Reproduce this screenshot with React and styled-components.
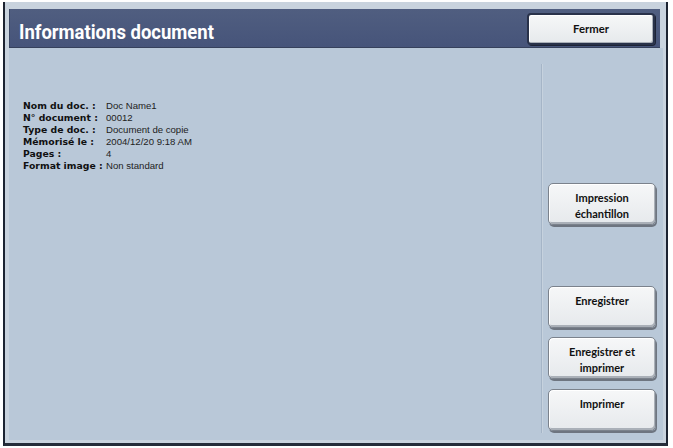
import React from "react";
import styled, { createGlobalStyle } from "styled-components";

const GlobalStyle = createGlobalStyle`
  html, body { margin: 0; padding: 0; background: #ffffff; }
  * { box-sizing: border-box; }
`;

const Screen = styled.div`
  margin: 2px 0 0 3px;
  width: 665px;
  height: 444px;
  border-left: 2px solid #1c2331;
  border-right: 2px solid #1c2331;
  border-bottom: 3px solid #262d3a;
  background: #c9d3de;
  padding: 7px 6px 3px 4px;
  display: flex;
  flex-direction: column;
`;

const Header = styled.div`
  height: 39px;
  flex-shrink: 0;
  display: flex;
  align-items: flex-start;
  justify-content: space-between;
  padding: 4px 5px 0 10px;
  background: linear-gradient(#505e80, #46547a);
  box-shadow: inset 0 -1px 0 #36415c, inset 1px 0 0 #3c4866;
`;

const Title = styled.h1`
  margin: 7px 0 0;
  color: #ffffff;
  font-family: "Roboto", "Liberation Sans", sans-serif;
  font-weight: bold;
  font-size: 21px;
  line-height: 24px;
  white-space: nowrap;
  transform: scaleX(0.88);
  transform-origin: left center;
`;

const Body = styled.div`
  flex: 1;
  display: flex;
  margin-right: -3px;
  background: #b9c8d8;
`;

const InfoPanel = styled.div`
  flex: 1;
  padding: 51px 0 0 14px;
`;

const InfoGrid = styled.dl`
  margin: 0;
  display: grid;
  grid-template-columns: 83px auto;
  grid-auto-rows: 12px;
  align-items: center;
`;

const Label = styled.dt`
  font-family: "DejaVu Sans", sans-serif;
  font-weight: bold;
  font-size: 9.3px;
  color: #101010;
  white-space: nowrap;
`;

const Value = styled.dd`
  margin: 0;
  font-family: "Liberation Sans", Arial, sans-serif;
  font-size: 9.6px;
  color: #222222;
  white-space: nowrap;
`;

const Divider = styled.div`
  width: 2px;
  margin: 16px 0 7px;
  border-left: 1px solid #a5b5c7;
  border-right: 1px solid #c6d2de;
`;

const SideColumn = styled.div`
  width: 120px;
  padding-left: 5px;
  display: flex;
  flex-direction: column;
`;

const Button = styled.button`
  width: ${(p) => p.$w || 108}px;
  height: ${(p) => p.$h || 42}px;
  margin-top: ${(p) => p.$top || 0}px;
  flex-shrink: 0;
  padding: 6px 0 0;
  display: flex;
  flex-direction: column;
  justify-content: flex-start;
  align-items: center;
  align-self: flex-start;
  font-family: "Lato", "Open Sans", sans-serif;
  font-weight: bold;
  font-size: 11px;
  line-height: 16px;
  color: #111111;
  border: 1px solid #7b828c;
  border-radius: 5px;
  background: linear-gradient(#f6f7f8, #e6e9ec);
  box-shadow: inset 1px 1px 0 #ffffff, inset -1px -2px 0 #aab0b8, 1px 2px 0 #6e7580;
  cursor: pointer;
`;

const CloseButton = styled(Button)`
  justify-content: center;
  padding: 0;
  font-size: 11.3px;
  border: 2px solid #29324a;
  border-radius: 4px;
  box-shadow: inset 1px 1px 0 #ffffff, inset -1px -1px 0 #aab0b8, 1px 1px 0 #1d2436;
`;

const rows = [
  ["Nom du doc. :", "Doc Name1"],
  ["N° document :", "00012"],
  ["Type de doc. :", "Document de copie"],
  ["Mémorisé le :", "2004/12/20 9:18 AM"],
  ["Pages :", "4"],
  ["Format image :", "Non standard"],
];

export default function App() {
  return (
    <>
      <GlobalStyle />
      <Screen>
        <Header>
          <Title>Informations document</Title>
          <CloseButton $w={128} $h={32}>
            <span>Fermer</span>
          </CloseButton>
        </Header>
        <Body>
          <InfoPanel>
            <InfoGrid>
              {rows.map(([l, v]) => (
                <React.Fragment key={l}>
                  <Label>{l}</Label>
                  <Value>{v}</Value>
                </React.Fragment>
              ))}
            </InfoGrid>
          </InfoPanel>
          <Divider />
          <SideColumn>
            <Button $top={135}>
              <span>Impression</span>
              <span>échantillon</span>
            </Button>
            <Button $top={61}>
              <span>Enregistrer</span>
            </Button>
            <Button $top={9}>
              <span>Enregistrer et</span>
              <span>imprimer</span>
            </Button>
            <Button $top={10}>
              <span>Imprimer</span>
            </Button>
          </SideColumn>
        </Body>
      </Screen>
    </>
  );
}
